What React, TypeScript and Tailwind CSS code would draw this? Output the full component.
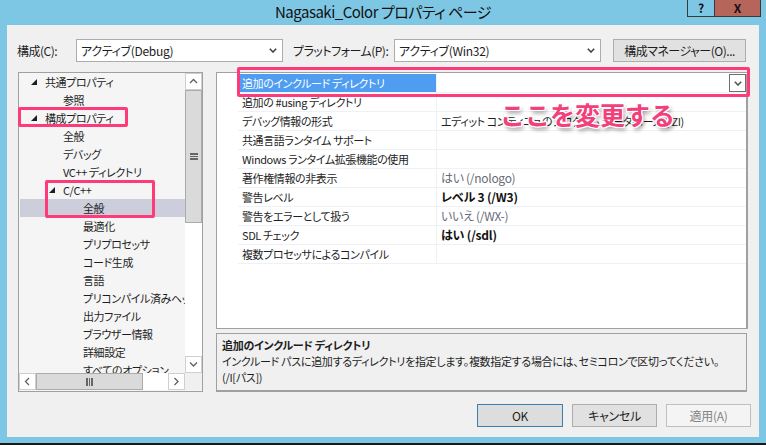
import React from "react";

const FONT = "font-['Noto_Sans_CJK_JP',sans-serif] [font-feature-settings:'palt']";

function Chevron({ color = "#444" }: { color?: string }) {
  return (
    <svg width="8" height="5" viewBox="0 0 8 5">
      <polyline points="0.8,0.8 4,4 7.2,0.8" fill="none" stroke={color} strokeWidth="1.6" />
    </svg>
  );
}

function Arrow({ dir }: { dir: "up" | "down" | "left" | "right" }) {
  const pts: Record<string, string> = {
    up: "1,5 4.5,1.5 8,5",
    down: "1,1.5 4.5,5 8,1.5",
    left: "5,1 1.5,4.5 5,8",
    right: "1.5,1 5,4.5 1.5,8",
  };
  const vertical = dir === "up" || dir === "down";
  return (
    <svg width={vertical ? 9 : 7} height={vertical ? 7 : 9} viewBox={vertical ? "0 0 9 7" : "0 0 7 9"}>
      <polyline points={pts[dir]} fill="none" stroke="#606060" strokeWidth="1.3" />
    </svg>
  );
}

function Tri() {
  return (
    <svg width="6" height="6" viewBox="0 0 6 6">
      <polygon points="6,0 6,6 0,6" fill="#1e1e1e" />
    </svg>
  );
}

function Combo({ text }: { text: string }) {
  return (
    <div className="w-[207px] h-[23px] bg-white border border-[#acacac] flex items-center justify-between pl-[4px] pr-[5px]">
      <span className="text-[12px] tracking-[-0.3px] leading-none text-[#1e1e1e] whitespace-nowrap">{text}</span>
      <Chevron />
    </div>
  );
}

type TreeItem = { t: string; lvl: number; exp?: boolean; sel?: boolean };
const tree: TreeItem[] = [
  { t: "共通プロパティ", lvl: 0, exp: true },
  { t: "参照", lvl: 1 },
  { t: "構成プロパティ", lvl: 0, exp: true },
  { t: "全般", lvl: 1 },
  { t: "デバッグ", lvl: 1 },
  { t: "VC++ ディレクトリ", lvl: 1 },
  { t: "C/C++", lvl: 1, exp: true },
  { t: "全般", lvl: 2, sel: true },
  { t: "最適化", lvl: 2 },
  { t: "プリプロセッサ", lvl: 2 },
  { t: "コード生成", lvl: 2 },
  { t: "言語", lvl: 2 },
  { t: "プリコンパイル済みヘッダー", lvl: 2 },
  { t: "出力ファイル", lvl: 2 },
  { t: "ブラウザー情報", lvl: 2 },
  { t: "詳細設定", lvl: 2 },
  { t: "すべてのオプション", lvl: 2 },
];

type Row = { n: string; v: string; kind?: "sel" | "gray" | "bold" };
const rows: Row[] = [
  { n: "追加のインクルード ディレクトリ", v: "", kind: "sel" },
  { n: "追加の #using ディレクトリ", v: "" },
  { n: "デバッグ情報の形式", v: "エディット コンティニュのプログラム データベース (/ZI)" },
  { n: "共通言語ランタイム サポート", v: "" },
  { n: "Windows ランタイム拡張機能の使用", v: "" },
  { n: "著作権情報の非表示", v: "はい (/nologo)", kind: "gray" },
  { n: "警告レベル", v: "レベル 3 (/W3)", kind: "bold" },
  { n: "警告をエラーとして扱う", v: "いいえ (/WX-)", kind: "gray" },
  { n: "SDL チェック", v: "はい (/sdl)", kind: "bold" },
  { n: "複数プロセッサによるコンパイル", v: "" },
];

function TreeRow({ it }: { it: TreeItem }) {
  const textPad = it.lvl === 0 ? "pl-[25px]" : it.lvl === 1 ? "pl-[43px]" : "pl-[63px]";
  const triLeft = it.lvl === 0 ? "left-[11px]" : "left-[29px]";
  return (
    <div
      className={`relative h-[18px] ml-[1px] flex items-center whitespace-nowrap text-[11px] tracking-[-0.4px] leading-none text-[#1e1e1e] ${textPad} ${
        it.sel ? "bg-[#cccedb]" : ""
      }`}
    >
      {it.exp && (
        <span className={`absolute top-[6px] ${triLeft} flex`}>
          <Tri />
        </span>
      )}
      <span>{it.t}</span>
    </div>
  );
}

function Tree() {
  return (
    <div className="w-[185px] h-[320px] border border-[#a0a0a0] bg-[#f5f5f5] grid grid-cols-[166px_17px] grid-rows-[300px_17px]">
      <div className="overflow-hidden">
        {tree.map((it, i) => (
          <TreeRow key={i} it={it} />
        ))}
      </div>
      <div className="flex flex-col bg-white">
        <div className="h-[17px] border border-[#cfcfcf] bg-white flex items-center justify-center">
          <Arrow dir="up" />
        </div>
        <div className="h-[133px] bg-[#dadada] border border-[#ababab] flex items-center justify-center">
          <div className="w-[8px] flex flex-col gap-[1px]">
            <div className="h-[1.5px] bg-[#666]" />
            <div className="h-[1.5px] bg-[#666]" />
            <div className="h-[1.5px] bg-[#666]" />
          </div>
        </div>
        <div className="flex-1 bg-white" />
        <div className="h-[17px] border border-[#cfcfcf] bg-white flex items-center justify-center">
          <Arrow dir="down" />
        </div>
      </div>
      <div className="flex bg-white">
        <div className="w-[17px] border border-[#cfcfcf] flex items-center justify-center">
          <Arrow dir="left" />
        </div>
        <div className="w-[107px] bg-[#dadada] border border-[#ababab] flex items-center justify-center">
          <div className="h-[8px] flex gap-[1px]">
            <div className="w-[1.5px] bg-[#666]" />
            <div className="w-[1.5px] bg-[#666]" />
            <div className="w-[1.5px] bg-[#666]" />
          </div>
        </div>
        <div className="flex-1 bg-white" />
        <div className="w-[17px] border border-[#cfcfcf] flex items-center justify-center">
          <Arrow dir="right" />
        </div>
      </div>
      <div className="bg-[#f0f0f0]" />
    </div>
  );
}

function Grid() {
  return (
    <div className="w-[532px] h-[257px] border border-[#a0a0a0] bg-white pt-[1px] flex">
      <div className="w-[21px]" />
      <div className="flex-1 flex flex-col">
        {rows.map((r, i) => (
          <div key={i} className="h-[19px] flex border-b border-[#eef1f6]">
            <div
              className={`w-[199px] border-r border-[#eef1f6] flex items-center pl-[4px] whitespace-nowrap overflow-hidden text-[11px] tracking-[-0.4px] leading-none ${
                r.kind === "sel" ? "bg-[#4f9df1] text-white" : "text-[#1e1e1e]"
              }`}
            >
              {r.n}
            </div>
            <div
              className={`flex-1 flex items-center pl-[4px] whitespace-nowrap overflow-hidden leading-none ${
                r.kind === "bold"
                  ? "font-bold text-[#111] text-[12px] tracking-[-0.2px]"
                  : r.kind === "gray"
                  ? "text-[#6a6a78] text-[12px] tracking-[-0.3px]"
                  : "text-[#1e1e1e] text-[11px] tracking-[-0.4px]"
              }`}
            >
              <span className="flex-1">{r.v}</span>
              {r.kind === "sel" && (
                <div className="w-[17px] h-[18px] border border-[#707070] bg-white flex items-center justify-center">
                  <Chevron color="#555" />
                </div>
              )}
            </div>
          </div>
        ))}
      </div>
      <div className="w-[1px] bg-[#a0a0a0]" />
    </div>
  );
}

function Desc() {
  return (
    <div className="w-[531px] h-[59px] border border-[#a0a0a0] border-b-2 bg-[#f0f0f0] pl-[5px] pt-[3px] text-[11px] tracking-[-0.3px] leading-none text-[#1e1e1e]">
      <div className="h-[16px] flex items-center font-bold">追加のインクルード ディレクトリ</div>
      <div className="h-[17px] flex items-center whitespace-nowrap">
        インクルード パスに追加するディレクトリを指定します。複数指定する場合には、セミコロンで区切ってください。
      </div>
      <div className="h-[15px] flex items-center">(/I[パス])</div>
    </div>
  );
}

function Btn({ text, kind }: { text: string; kind?: "def" | "dis" }) {
  const cls =
    kind === "def"
      ? "border-[#3c7fb1] bg-[#dddddd] text-[#1e1e1e]"
      : kind === "dis"
      ? "border-[#bfbfbf] bg-[#f4f4f4] text-[#838383]"
      : "border-[#adadad] bg-[#e1e1e1] text-[#1e1e1e]";
  return (
    <div className={`h-[23px] border flex items-center justify-center text-[12px] tracking-[-0.3px] leading-none ${cls}`}>
      {text}
    </div>
  );
}

export default function App() {
  return (
    <div className={`relative w-[766px] h-[445px] bg-[#7ec7e4] overflow-hidden ${FONT}`}>
      {/* title bar */}
      <div className="relative h-[25px] flex items-start justify-center pt-[4px]">
        <span className="text-[15px] tracking-[-0.5px] leading-none text-[#111]">Nagasaki_Color プロパティ ページ</span>
        <div className="absolute top-0 left-[687px] flex">
          <div className="w-[27px] h-[17px] border-l border-b border-[#3a3a3a] flex items-center justify-center text-[12px] font-bold leading-none text-[#111]">
            ?
          </div>
          <div className="w-[47px] h-[17px] border-l border-r border-b border-[#3a3a3a] bg-[#b5655a] flex items-center justify-center text-[12px] font-bold leading-none text-[#111]">
            X
          </div>
        </div>
      </div>

      {/* client */}
      <div className="ml-[7px] w-[752px] h-[412px] bg-[#f0f0f0] flex flex-col">
        <div className="mt-[14px] h-[23px] flex items-center text-[12px] tracking-[-0.5px] leading-none text-[#1e1e1e] whitespace-nowrap">
          <div className="w-[69px] pl-[10px]">構成(C):</div>
          <Combo text="アクティブ(Debug)" />
          <div className="w-[111px] pl-[10px]">プラットフォーム(P):</div>
          <Combo text="アクティブ(Win32)" />
          <div className="ml-[12px] w-[133px] h-[23px] border border-[#adadad] bg-[#e1e1e1] flex items-center justify-center">
            構成マネージャー(O)...
          </div>
        </div>

        <div className="mt-[10px] flex">
          <div className="ml-[11px]">
            <Tree />
          </div>
          <div className="ml-[13px] flex flex-col gap-[4px]">
            <Grid />
            <Desc />
          </div>
        </div>

        <div className="mt-[12px] flex pl-[470px] gap-[9px]">
          <div className="w-[86px]">
            <Btn text="OK" kind="def" />
          </div>
          <div className="w-[85px]">
            <Btn text="キャンセル" />
          </div>
          <div className="w-[85px]">
            <Btn text="適用(A)" kind="dis" />
          </div>
        </div>
      </div>
      <div className="mt-[6px] h-[2px] bg-[#1a1a1a]" />

      {/* annotations */}
      <div className="absolute left-[237px] top-[67px] w-[513px] h-[30px] border-[3px] border-[#ff3a78] rounded-[2px]" />
      <div className="absolute left-[18px] top-[107px] w-[110px] h-[20px] border-[3px] border-[#ff3a78] rounded-[2px]" />
      <div className="absolute left-[45px] top-[180px] w-[110px] h-[38px] border-[3px] border-[#ff3a78] rounded-[2px]" />
      <div className="absolute left-[500px] top-[102px] text-[25px] font-bold leading-none text-[#f2407c] [font-feature-settings:normal] [text-shadow:0_0_2px_#fff,1px_1px_0_#fff,-1px_-1px_0_#fff,1px_-1px_0_#fff,-1px_1px_0_#fff,2px_3px_4px_rgba(0,0,0,0.45)]">
        ここを変更する
      </div>
    </div>
  );
}
